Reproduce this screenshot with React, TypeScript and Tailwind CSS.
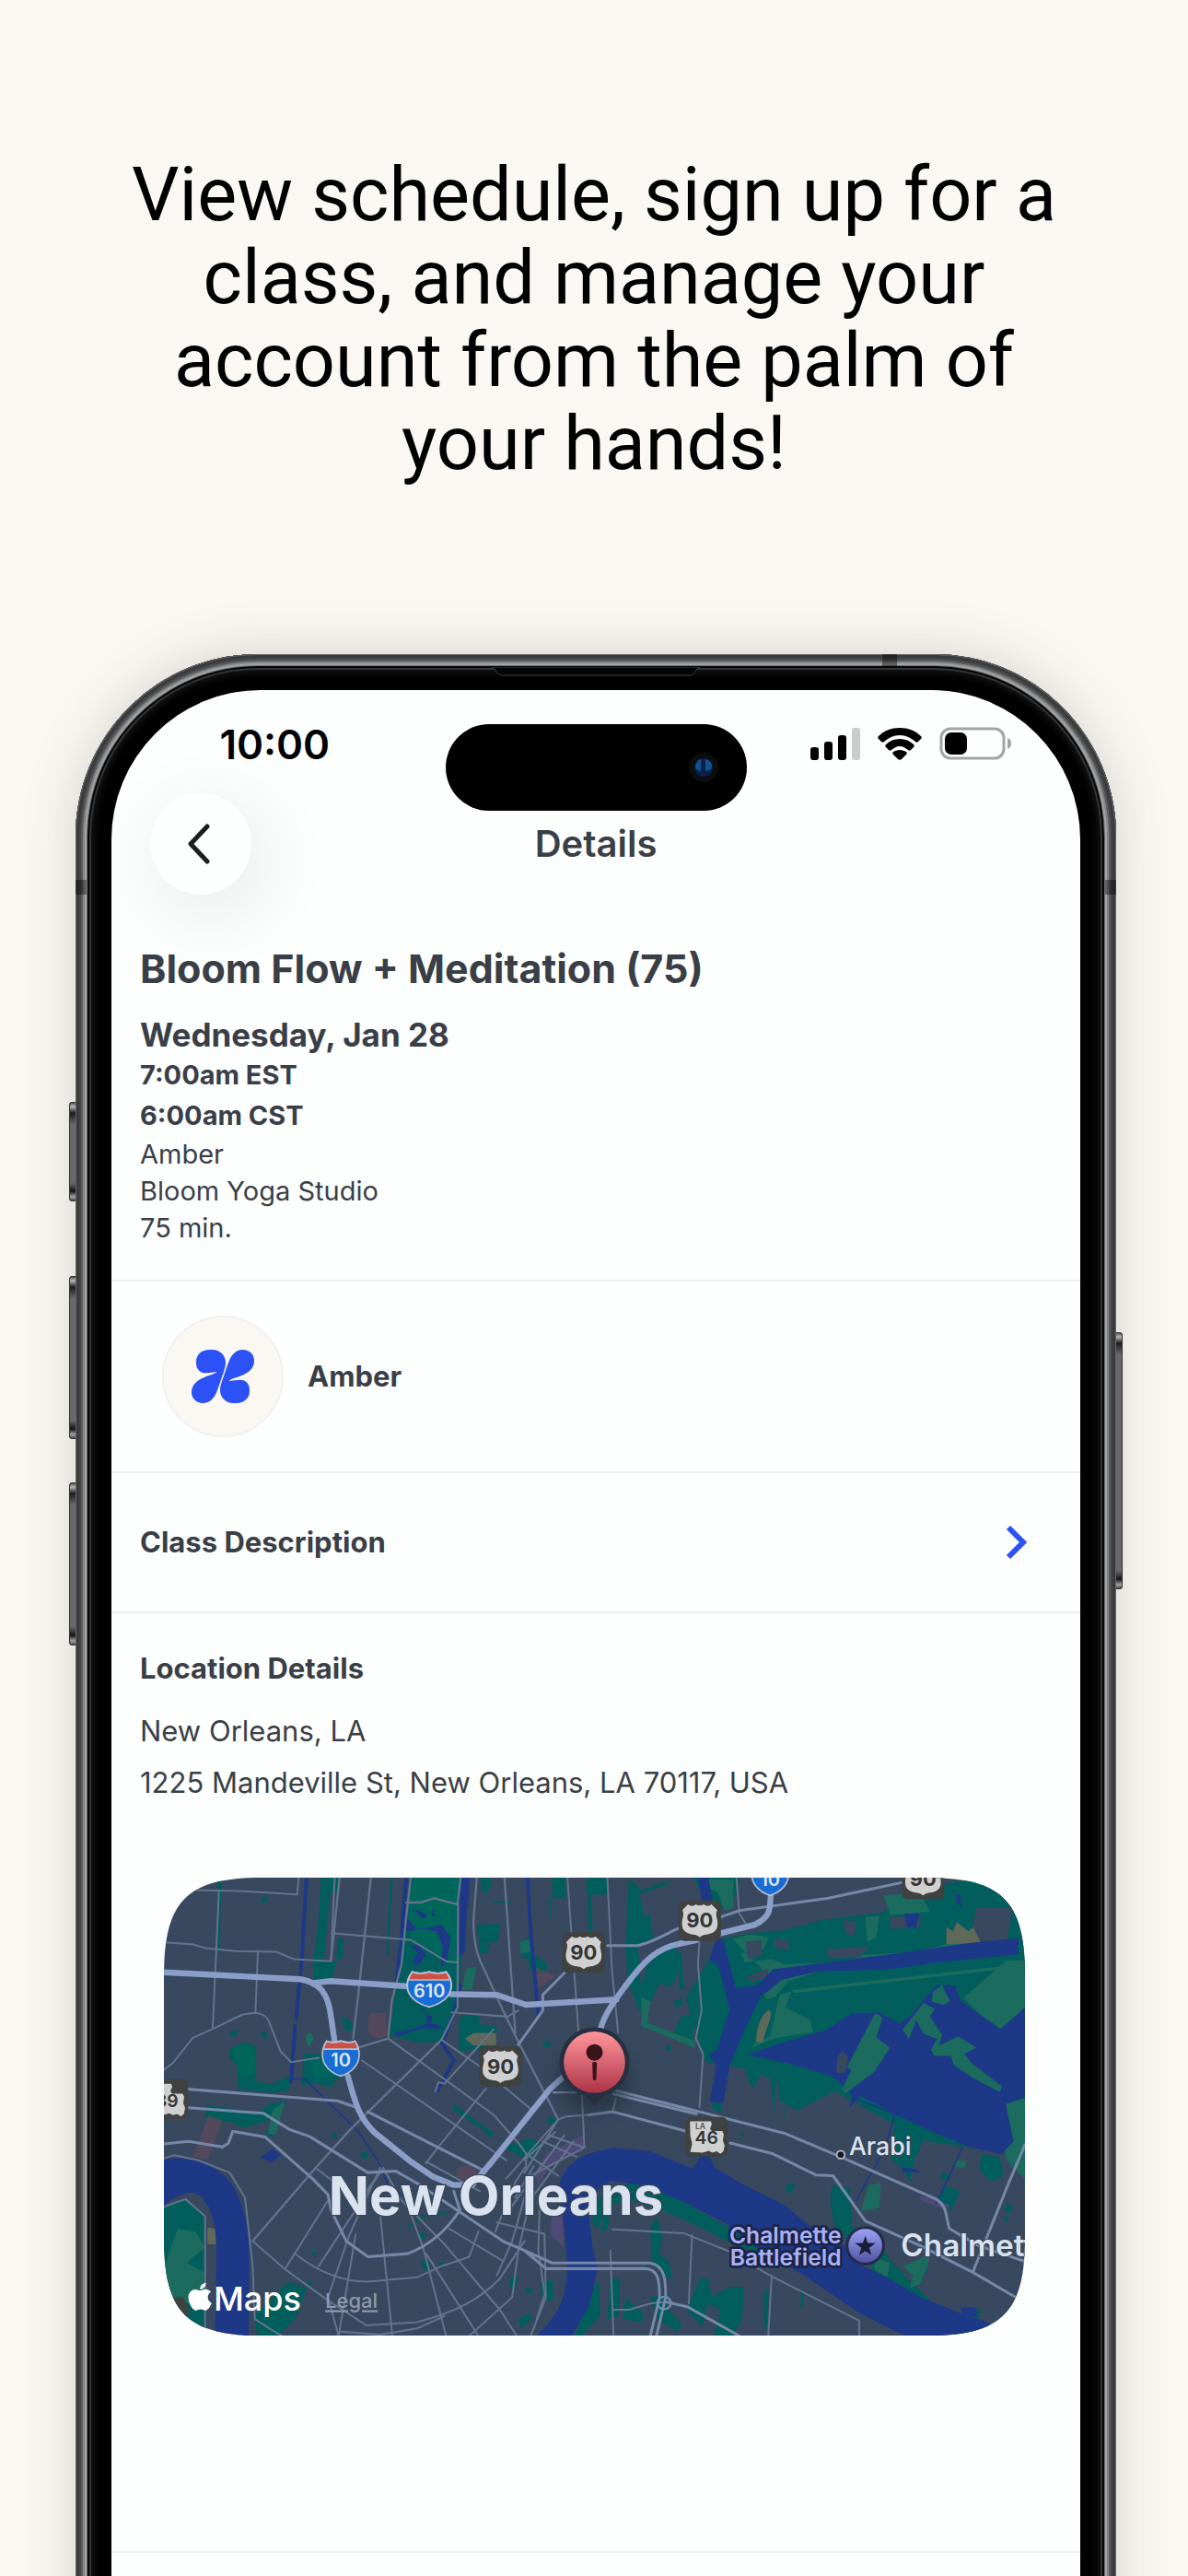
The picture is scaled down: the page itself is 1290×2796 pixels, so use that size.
import type { ReactNode } from 'react'
import { FaApple } from 'react-icons/fa'

const LAND = '#38495f'
const WATER = '#1e3888'
const TEAL = '#015e5d'
const PARK = '#00655a'
const MOSS = '#1b6b5e'
const ROAD = '#63738d'
const MAJOR = '#7688a7'
const HIGHWAY = '#8b9ec8'

function StatusBar() {
  return (
    <div className="grid grid-cols-[1fr_327px_1fr] items-start pt-[37px]">
      <time className="pr-2 text-center text-[44px] leading-[44px] font-semibold text-black">10:00</time>
      <div className="flex h-[94px] items-center justify-end rounded-full bg-black pr-[31px]">
        <svg viewBox="0 0 32 32" className="size-8" aria-hidden="true">
          <circle cx="16" cy="16" r="16" fill="#0c0d0f" />
          <circle cx="16" cy="16" r="10" fill="#08204a" />
          <path d="M9 10c2-3 4-3 4-3v13c-3 0-6-3-6-6zM18 7c5 1 8 5 7 9-2 4-6 4-7 3z" fill="#12538c" />
        </svg>
      </div>
      <div className="flex items-center justify-center gap-[19px] pt-[3px] pr-1">
        <svg viewBox="0 0 54 35" className="h-[35px] w-[54px]" aria-hidden="true">
          <rect x="0" y="21" width="9" height="14" rx="3" />
          <rect x="15" y="15" width="9" height="20" rx="3" />
          <rect x="30" y="8" width="9" height="27" rx="3" />
          <rect x="45" y="0" width="9" height="35" rx="3" fill="#cbcccc" />
        </svg>
        <svg viewBox="0 0 48 35" className="h-[35px] w-12" aria-hidden="true">
          <path d="M24 0c9 0 17 3 23 9 1 1 1 2 0 3l-3 3c-1 1-2 1-3 0-5-4-10-7-17-7S12 11 7 15c-1 1-2 1-3 0l-3-3c-1-1-1-2 0-3C7 3 15 0 24 0z" />
          <path d="M24 12c6 0 11 2 15 6 1 1 1 2 0 3l-3 3c-1 1-2 1-3 0-3-2-5-4-9-4s-6 2-9 4c-1 1-2 1-3 0l-3-3c-1-1-1-2 0-3 4-4 9-6 15-6z" />
          <path d="M24 24c3 0 5 1 7 2 1 1 1 2 0 3l-5 5c-1 1-3 1-4 0l-5-5c-1-1-1-2 0-3 2-1 4-2 7-2z" />
        </svg>
        <svg viewBox="0 0 79 36" className="h-9 w-[79px]" aria-hidden="true">
          <rect x="2" y="2" width="68" height="32" rx="10" fill="none" stroke="#a3a4a4" strokeWidth="3" />
          <rect x="6" y="6" width="24" height="24" rx="7" />
          <path d="M74 12c3 1 4 3 4 6s-1 5-4 6z" fill="#a3a4a4" />
        </svg>
      </div>
    </div>
  )
}

function NavBar() {
  return (
    <nav className="-mt-[19px] grid grid-cols-[1fr_auto_1fr] items-center px-[42px]">
      <button
        type="button"
        aria-label="Back"
        className="flex size-[110px] items-center justify-center rounded-full bg-[#fdfffe] shadow-[12px_18px_80px_6px_rgba(0,0,0,0.08)]"
      >
        <svg viewBox="0 0 26 44" className="mr-1 h-11 w-[26px]" aria-hidden="true">
          <path d="M22 3 4 22l18 19" fill="none" stroke="#1d1d1f" strokeWidth="5" strokeLinecap="round" strokeLinejoin="round" />
        </svg>
      </button>
      <h2 className="text-[40px] leading-[48px] font-semibold">Details</h2>
    </nav>
  )
}

function BloomLogo() {
  const half =
    'M15 44v-5C15 16 33 0 58 0h10c25 0 43 19 43 42 0 12-3 20-7 32-9 25-16 50-25 70-10 20-24 30-41 30-23 0-38-15-38-35 0-25 18-40 43-50 15-6 33-10 39-16-9-2-19 3-37 3-18 0-30-14-30-32z'
  return (
    <svg viewBox="0 0 204 174" className="w-[68px]" fill="#2c51f6" aria-hidden="true">
      <path d={half} />
      <path d={half} transform="rotate(180 102 87)" />
    </svg>
  )
}

function UsRoute({ x, y, label }: { x: number; y: number; label: string }) {
  return (
    <g transform={`translate(${x} ${y})`}>
      <rect x="-69" y="-66" width="138" height="132" rx="20" fill="#404141" />
      <path
        d="M-38-53c8 7 18 6 25 0 8 5 18 5 26 0 7 6 17 7 25 0l19 19c-9 14 2 28 1 45 0 24-16 31-36 34-10 1-16 4-22 9-6-5-12-8-22-9-20-3-36-10-36-34-1-17 10-31 1-45z"
        fill="#cfd0cf"
      />
      <text y="23" textAnchor="middle" fontSize="66" fontWeight="700" fill="#343536">{label}</text>
    </g>
  )
}

function Interstate({ x, y, wide, label }: { x: number; y: number; wide?: boolean; label: string }) {
  return (
    <g transform={`translate(${x} ${y})`}>
      <g transform={wide ? 'scale(1.2 1)' : undefined} stroke="#b9bfd0" strokeWidth="5">
        <path d="M-46-56c14 6 32 5 46 0 14 5 32 6 46 0 8 12 14 26 14 44 0 36-28 60-60 70-32-10-60-34-60-70 0-18 6-32 14-44z" fill="#186dd5" />
        <path d="M-46-56c14 6 32 5 46 0 14 5 32 6 46 0 5 8 9 16 11 26H-57c2-10 6-18 11-26z" fill="#cb5046" />
      </g>
      <text y="27" textAnchor="middle" fontSize="60" fontWeight="600" fill="#dfe6f3">{label}</text>
    </g>
  )
}

function StateRoute({ x, y, label, small }: { x: number; y: number; label: string; small?: string }) {
  return (
    <g transform={`translate(${x} ${y})`}>
      <rect x="-69" y="-64" width="138" height="128" rx="20" fill="#404141" />
      <path d="M-54-50h68l3 10-6 14 6 8h34l5 10-3 22 6 14-4 20-10 8-12-8-14 4-12-6-20 6-40-2 6-26-6-28z" fill="#cfd0cf" />
      {small && <text x="-20" y="-24" textAnchor="middle" fontSize="26" fontWeight="600" fill="#555">{small}</text>}
      <text y="25" textAnchor="middle" fontSize="58" fontWeight="600" fill="#343536">{label}</text>
    </g>
  )
}

function Lines({ color, width, children }: { color: string; width: number; children: ReactNode }) {
  return (
    <g fill="none" stroke={color} strokeWidth={width} strokeLinejoin="round" strokeLinecap="round">
      {children}
    </g>
  )
}

function Terrain() {
  return (
    <g transform="translate(0 -1) scale(1 1.015)">
      {/* parks and marsh */}
      <g fill={TEAL}>
        <path d="M56 1110 125 1085 190 1140 195 1524H56zM790 560 860 54h178l-22 420-50 105-80 5z" />
        <path d="M566 54h64l-8 50-24-4-14 140-8 80h44l-18 70-54 8-8-60 16-110 8-114zM640 250h-16l-8 68 22-6zM230 66h14l-8 230h-10z" />
        <path d="M802 54h-8l-14 250 6 2zM1090 54h30v30l-14 22-18-14zM1074 206l78-4-10 60h-28l-30 4zM1018 502l60-14 8 36 56 8-8 70-118 8zM1320 54h44v66h-44zM1432 54h68v54h-68zM1308 120h8v66h-6z" />
        <path d="M1214 262l34-20 14 60 44 30-12 30-44-10-8-34-22-10zM1436 110h12l4 120h-14zM1128 130h60v6h-60zM1084 266l38 4-16 28-24-4z" />
        <path d="M270 600l54-18 32 14-2 110 46 10 68-24-6 46-50 6-114-10-4-80-26-20zM270 548l24-6 2 18-22 2zM372 552l16-6 6 20-18 4zM374 120l24-10-6 20-18 4z" />
        <path d="M196 782l48 8 120 18 40-30 56-10-54 60-42 14-50 16-40-20-84-16zM410 820l-22 60 22 4 22-54zM510 620h90l40 60-44 46-46-12-44 6z" />
        <path d="M630 500l30 10 14 30-24 10zM696 940l16-10 10 14-12 18zM600 880l18-6 2 14-16 2zM1000 780l110 80 20 10-10 20-30-30-90-60zM1150 890l40 20 60-20 40 20-50 50-60-30z" />
        <path d="M890 1190l22 8-14 16-14-4zM892 1290l18-14 14 24-16 16zM946 1290l30-6-16 18zM850 1170l80-50 60 10-80 10-56 36zM350 1460l110-110 60 20-30 90-60 64h-70z" />
        <path d="M530 1250l26 8-10 12zM520 1350l22 2-10 12zM1180 1350l20-30 10 20-20 50zM1282 1350l40-4 2 60-34 10zM1210 1470l36-20 10 20-40 30zM1236 1370l22 6-6 14-18-4zM1302 830l24-10 4 20-20 8zM1292 578l22 2-2 20-20-4z" />
        <path d="M1450 1130l28-60 30 10-20 60-20 40-16-20zM1440 1380l34-30 2 110-60 64h-20z" />
      </g>
      <g fill={TEAL}>
        <path d="M1440 54h54v50h-54zM1570 60l30 20 20 100 20-10 10 90-50 10 10 140-10 60-34-90-6-120zM1600 96l100-30v10l-94 30zM1640 300l80-36 20 70-30 70-40-10-20 40-24 60-30-20 20-90zM1740 290l10 120-14 8-8-120z" />
        <path d="M1780 54h150l-10 60-30-4-20 60-60-60zM1740 500l44-10-4 80-40 10-24-30zM1720 450l20-10 8 20-24 12zM1690 600l14-10 4 14-12 8z" />
        <path d="M1870 250 1960 234 2080 222 2200 190 2400 166 2460 100 2640 66 2860 54V1010l-40-60-60-20-220-30-300-160-120 60-60-30-4-60-90-40-150-30-60-200z" />
        <path d="M1820 590l60 10 50 40 260 60 30 20-80 0-30-10-110-40-10 40-20 20-20-60-60-20-60 0zM1850 720l24-40 16 6-20 120-30-10zM2030 700h20l-6 100-8 20 6-30zM2100 680l-20 130-14 40 24-100zM2160 740l20 10-16 24-14-6z" />
        <path d="M2436 820l80 20 30 20-50 110-10 60-30-50-30-20zM2230 1040l60 10 6 120 50 30 30 30-20 40-60-40-56-60-14-70zM2600 1040l50 20-30 60-50-20zM2720 940l60 10 10 60-40 20-40-40z" />
        <path d="M1930 870l14 4-6 14zM2080 1050l20-20 10 6-10 30-20-6zM2380 1220l40 60 60 60 80 80 60 30 100-10-20 50 50 20v14h-100l-100-80-120-60-70-80z" />
        <path d="M1500 1060l80-30 60 20 100 40 200 110 60 40 10 20-80-20-120-60-130-60-100-30-60 10-20 80-20 10zM1640 1180l20-40 20 60-10 60 30 24 14 60-30-14-40-50zM1800 1340h30l10 60 60-34h44l-6 110-30 46h-60l20-80-40-20-20 70-50-50z" />
        <path d="M1560 1400l20 20 40 30-10 30-60-10zM1640 1400l60-10-6 40 50 60-20 20-60-40zM1510 1340h30v120l-40 10zM2010 1376l16 6-8 120-8 6zM2130 1380h8v50h-8zM2800 1100l20 8-8 24-18-8zM2790 1140l20 4-10 20zM2590 1000l20 6v20l-24-6z" />
      </g>
      <path d="M868 54h164l-18 86-76-18-90 12zM850 140l90-16 74 20-4 180-60-20-90-44zM530 640l60-10 20 60-60 10zM280 600l40-14 34 20 0 80-50 10z" fill={PARK} />
      <g fill={MOSS}>
        <path d="M100 1180l60 10 30 50-60 50 60 30-20 90-90 20-24-120zM410 800l40-30-30 110-26-6zM1216 260l30-10 6 40-34 10zM1040 345l34-4-14 70-34 4zM515 560l20-8 10 20-20 26z" />
        <path d="M1830 60h80v90l-30 10-20-60-30-10zM1906 250l60-14 60 10-20 40-70 10 10 30 90-10 40 16 220-10 30-20 180-10 60-14 80-26 80 10-40 30-140 10-220 20-90 16-90 30-60 20-40 50-30 6-20-40 14-50z" />
        <path d="M2400 110l120-6 30 60-130 10zM2340 180l46-4-10 70-30 14zM2660 440l140-120h60v150l-80 70-70-50zM1610 440l30 10-10 70 80 30 80 30-10 20-90-40-80-30 2-20z" />
        <path d="M2100 414 2860 330v10L2110 424zM2060 430l40-10-20 50 80 40 10 40-130 20-70 30 10-16 50-20zM2790 780l70-20v260l-60-60-20-100z" />
        <path d="M2350 1040l40-6-4 80-60 10zM2460 1300l30-10 60-30-10 50-24 50-30 10 10-40zM2370 1270l50 20-10 50-40-30zM2630 960l40 4-6 20-30-2z" />
      </g>
      <g fill="#5f6859">
        <path d="M1985 580c0-50 20-90 40-100 10-2 8 20 2 36-10 30-16 40-20 68zM2604 212l22 14 12-30 24 20 14 10 32-28 12 66-116 4zM1036 570l30-18h72v40h-76zM198 1176l28 4v50h-28z" />
      </g>
      <path d="M725 490l54-4 4 74-34 10-28-20zM202 816l42 20-44 124-50-10zM1010 985l40-10 40 30-30 30-50-20zM1264 340l70 30-60 40z" fill="#65485a" opacity="0.6" />
      <path d="M1300 940l120-60 4 40-110 60-40 60-8-40zM1316 1140h38l4 100-42-40zM2516 1076l60 10 40 20-14 14-80-30z" fill="#554b7c" opacity="0.8" />
      <path d="M1950 260l52-6 2 50-44 12zM2044 250l44 4 4 34-48-10zM2214 284l140-10-30 34-100 6zM1954 370l70-24v24l-50 20zM2700 150h120l-20 120h-80l-30-60zM2270 190l40 4-6 50-30-14zM2420 180h104l-10 34-92 4z" fill={LAND} />

      {/* river, canals and lakes */}
      <g fill={WATER}>
        <path d="M56 956C150 946 230 975 275 1035 325 1110 335 1200 334 1300L332 1524H222L226 1310C232 1200 220 1120 180 1080 150 1050 110 1065 56 1106z" />
        <path d="M1270 1524C1340 1455 1370 1400 1368 1300 1366 1200 1350 1120 1344 1040 1355 985 1400 945 1470 932L1520 920 1640 932 1780 988 1800 950 1830 945 1850 985 1950 1042 2080 1106 2160 1172 2240 1195 2310 1290 2400 1330 2520 1400 2660 1455 2740 1480 2760 1524H2470L2320 1450 2140 1330 2000 1250 1880 1160 1740 1090 1610 1040 1510 1026 1464 1060 1440 1140 1452 1240 1468 1310 1440 1430 1385 1524z" />
        <path d="M1795 54h34l14 76-34 4zM1850 250l28 0 20 80 20 78 70-8 50-52 160-20 240-30 240-34 160-16v52l-260 26-160 22-240 8-110 26-70 56-50 100-24 60-26 60-20 120-44-4 20-120-26-30 30-20 20-66 20-60-36-140-30-20 20-60z" />
        <path d="M1955 622l120-40 140-40 80-52 90-4 40 22 26 14 40-30 80-92h60l20 50 130 90 80-70v290l-64 20 26 120-40 40-100-20-160-66-200-100-36 40 10-40-60-60-130-40z" />
        <path d="M2466 170l50 0-10 44h-30zM2634 108h14l4 40-14-10zM368 950l20-10 20-18 30 22-30 24zM850 186l30 34 80-14 30 40-12 70-20 30 6-70-20-50-60-10-20 10-24-6zM864 150l50 24-16 12zM930 154l10 26-14-6zM862 276l20-10 26 36-24 36-20-14 20-30z" />
        <path d="M880 470l50 30-6 20 40 14-20 8-40-6-90 28-8-14 60-10 50-20-10-40zM2460 984l50 6 10 10-60-2zM2650 1430l50 4 6 30-50-10z" />
      </g>
      <g fill={MOSS}>
        <path d="M2372 488l24 14-20 64 44 34-50 76-94 70-12-14 30-60-14-10z" />
        <path d="M2530 455l36 20-16 24 40 60-10 34 62-30 60 36-40 20 24 30 100 76-8 16-90-46-60-40-10-30-54 0-10-20 20-34-44-16-24-44-24 60-20-30zM2560 420l30-20 26 50-20 12-40-10z" />
      </g>
      <path d="M2265 610l20 20-10 50-30 0 4-50z" fill={LAND} />
      <Lines color={WATER} width={12}>
        <path d="M520 54 506 300 487 505M845 54 830 240 812 400M1020 400 1000 490 962 586 1000 640 945 740M1240 54 1252 250 1275 490" />
        <path d="M483 530 470 710" />
      </Lines>
      <Lines color={WATER} width={28}>
        <path d="M1040 54 1026 200 1022 290" />
      </Lines>
      <Lines color={WATER} width={5}>
        <path d="M475 700h40L690 868 760 975 785 1040 830 1075M2435 820 2400 930 2310 1090M2655 920 2610 1020 2570 1100M2300 760 2560 860 2780 940" />
      </Lines>

      {/* local streets */}
      <Lines color={ROAD} width={6}>
        <path d="M495 54 490 108 320 98 165 94M235 100 215 535M56 262 150 268 190 280 290 290 422 292 480 316 600 322 612 54M602 232 860 254 975 322 1012 326M362 290 354 488M56 670 84 650 150 568 214 540 312 493 354 488C380 490 395 505 400 520L436 612 470 646 560 632" />
        <path d="M600 318 628 54M845 134h45l46-14 76 20 10-86M1014 140 1012 470 960 574 660 865 550 985 345 1220M860 54 845 180 830 330 798 450 786 570 680 602M1075 54 1064 190C1064 270 1080 310 1090 330L1160 480 1215 590 1340 830M1165 54 1200 550M730 54 690 420 672 570" strokeWidth="7" />
        <path d="M786 570 1130 815 1210 905 1236 940 1235 980 1200 1030 1135 1190M700 640 1170 960M960 574 1085 660 1255 800M992 486 1175 500 1210 480M1370 54 1406 550M1415 700 1425 920 1250 1010M1340 830 1230 1000M1340 830 1365 820 1440 815" />
        <path d="M1340 830 1170 1020M1360 880 1180 1120M1390 900 1240 1100M1290 900 1400 950M1310 880 1425 920M1250 950 1340 1010M1330 870 1230 960M1260 980 1200 1080M770 985 560 1300M550 985 700 1100M760 985 660 1200 590 1400 625 1524M770 985 700 1080M770 985 830 1090 970 1230 1150 1440 1205 1524" />
        <path d="M760 1130 780 1330 800 1524M840 1080 900 1240 975 1524M680 1200 625 1524M910 1260 1080 1524M590 1090 450 1310M345 1220 450 1310 590 1410 715 1490 880 1480C1000 1450 1080 1410 1150 1340L1230 1220M485 1262C560 1320 640 1350 720 1350L880 1336 960 1300 1010 1284 1050 1270 1080 1190M985 1180 1160 1284M1140 1160 1295 1196 1300 1400 1250 1524" />
        <path d="M1250 1080 1210 1250 1190 1400 1050 1524M1230 1080 1190 1220 1140 1330M1280 1100 1275 1250 1296 1390 1270 1470M630 1510 760 1520 880 1500 970 1460M190 1524V1140L126 1085 56 1110M56 955 90 944 165 960 270 1000 320 1080 345 1300 352 1470 400 1500 440 1524M910 965 1085 1060M910 970 940 930 1105 730M940 740 950 710 970 715 1130 540" />
      </Lines>
      <Lines color={ROAD} width={6}>
        <path d="M1500 54 1515 350 1535 550M1800 260 1795 330 1807 480 1788 570 1812 620 1800 790M1528 760 1518 805M1516 1182 1750 1195 1890 1250 2030 1330 2320 1475V1524M1776 1200 1765 1420M1510 1250 1520 1524M2035 1330 2024 1524M1520 1440H1570L1640 1420 1690 1415M1920 54 1930 170 1950 200" />
      </Lines>

      {/* major roads */}
      <Lines color={MAJOR} width={9}>
        <path d="M130 732 620 770 680 790M720 805 1090 990M135 792 380 810 465 862 530 884 720 1000 810 995 890 1040 1010 1120 1160 1220 1230 1250 1320 1290H1640C1690 1300 1690 1350 1690 1400L1660 1524M1230 1250 1300 1308H1620C1665 1310 1670 1340 1670 1400L1640 1524M56 908 136 900 246 918 266 906 280 868 386 886 540 1020 590 1070 600 1120 650 1220 720 1270 850 1260C930 1230 980 1180 1020 1120L1000 1060" />
        <path d="M1360 360 1290 430 1290 480 1210 590M1500 272H1600C1670 255 1710 220 1750 210M1870 180 1930 160 2220 120 2460 70M1520 735 1800 805 2080 875 2260 950 2570 1085C2610 1110 2600 1140 2614 1180L2710 1235 2860 1285M1520 748 1790 812M1440 815 1518 805 1760 868M1900 905 2040 940 2180 1008 2235 1010 2340 1155 2520 1235 2690 1320 2830 1400M2860 910 2800 1050 2690 1320M1690 1415 1760 1430 1930 1524" />
      </Lines>
      <Lines color={MAJOR} width={7}>
        <path d="M1325 743H1400" />
        <ellipse cx="1685" cy="1418" rx="22" ry="20" />
      </Lines>

      {/* highways */}
      <Lines color={HIGHWAY} width={19}>
        <path d="M56 358 500 380C560 390 590 420 600 500L612 580M655 690C680 780 690 820 740 870L860 965 930 1012 1000 1040H1060L1120 970 1310 735 1360 690" />
        <path d="M540 392 600 386 840 402M990 428 1140 430 1235 462 1530 445M1478 540C1490 490 1530 440 1560 400 1620 320 1660 280 1740 265L1790 255M1860 235 1980 205C2030 180 2030 160 2032 110" />
      </Lines>
      <path d="M60 1400h60l20 50-40 40-50-30z" fill="#404141" />
    </g>
  )
}

function LocationMap() {
  return (
    <svg
      viewBox="56 54 2804 1491"
      className="block w-full"
      role="img"
      aria-label="Map of New Orleans"
      fontFamily='Inter, "Liberation Sans", sans-serif'
    >
      <defs>
        <clipPath id="card">
          <path d="M56 374C56 129 131 54 376 54H2540C2785 54 2860 129 2860 374V1225C2860 1470 2785 1545 2540 1545H376C131 1545 56 1470 56 1225Z" />
        </clipPath>
        <linearGradient id="pin" x1="0" y1="0" x2="0" y2="1">
          <stop offset="0" stopColor="#ff969b" />
          <stop offset="1" stopColor="#ae3448" />
        </linearGradient>
        <linearGradient id="star" x1="0" y1="0" x2="0" y2="1">
          <stop offset="0" stopColor="#9ba1f3" />
          <stop offset="1" stopColor="#5255a4" />
        </linearGradient>
        <filter id="soft" x="-50%" y="-50%" width="200%" height="200%">
          <feGaussianBlur stdDeviation="24" />
        </filter>
      </defs>

      <g clipPath="url(#card)">
        <rect x="56" y="54" width="2804" height="1491" fill={LAND} />
        <Terrain />

        <UsRoute x={1423} y={298} label="90" />
        <UsRoute x={1152} y={669} label="90" />
        <UsRoute x={1801} y={194} label="90" />
        <UsRoute x={2528} y={58} label="90" />
        <Interstate x={920} y={417} label="610" wide />
        <Interstate x={632} y={642} label="10" />
        <Interstate x={2030} y={54} label="10" />
        <StateRoute x={66} y={775} label="39" />
        <StateRoute x={1823} y={897} label="46" small="LA" />

        <text x="592" y="1152" fontSize="174" fontWeight="700" fill="#dae2ef" stroke="#38465a" strokeWidth="8" paintOrder="stroke">New Orleans</text>
        <circle cx="2260" cy="956" r="13" fill="#16181c" stroke="#a9b2c0" strokeWidth="6" />
        <text x="2287" y="956" fontSize="80" fontWeight="500" fill="#dbe3f0" stroke="#38465a" strokeWidth="6" paintOrder="stroke">Arabi</text>
        <g fontSize="74" fontWeight="600" fill="#a9b1f6" stroke="#1c2445" strokeWidth="16" strokeLinejoin="round" paintOrder="stroke" textAnchor="end">
          <text x="2262" y="1245">Chalmette</text>
          <text x="2262" y="1318">Battlefield</text>
        </g>
        <circle cx="2340" cy="1252" r="64" fill="#252a4c" />
        <circle cx="2340" cy="1252" r="55" fill="url(#star)" />
        <path d="m2340 1220 8 23 25 1-20 15 7 24-20-14-20 14 7-24-20-15 25-1z" fill="#1c1d38" />
        <text x="2456" y="1287" fontSize="100" fontWeight="600" fill="#dae2ef" stroke="#38465a" strokeWidth="6" paintOrder="stroke">Chalmette</text>

        <ellipse cx="1458" cy="710" rx="120" ry="110" fill="#1f2937" opacity="0.55" filter="url(#soft)" />
        <path d="M1420 753h76l-38 42z" fill="#272f40" />
        <circle cx="1458" cy="655" r="114" fill="#272f40" />
        <circle cx="1458" cy="655" r="100" fill="url(#pin)" />
        <circle cx="1458" cy="623" r="27" fill="#3b131b" />
        <path d="M1451 656q7-4 15 0l-2 55q-5 6-11 0z" fill="#3b131b" />

        <FaApple x={122} y={1366} size={103} color="#ffffff" />
        <text x="218" y="1463" fontSize="108" fontWeight="500" fill="#ffffff">Maps</text>
        <a href="#legal">
          <text x="581" y="1456" fontSize="66" fontWeight="500" fill="#8e9aab" textDecoration="underline">Legal</text>
        </a>
      </g>
    </svg>
  )
}

function SideButton({ className }: { className: string }) {
  return (
    <span
      className={`absolute w-3 rounded-[4px] bg-[linear-gradient(to_bottom,#3a3a3b_0,#c4c4c5_5px,#1a1a1b_12px,#6c6d6f_24px,#6c6d6f_calc(100%-20px),#111112_calc(100%-11px),#b0b0b1_calc(100%-5px),#333334_100%)] shadow-[inset_0_0_0_1px_#333436] ${className}`}
    />
  )
}

function Phone({ children }: { children: ReactNode }) {
  return (
    <div className="relative mr-[78px] -mb-20 ml-[82px] flex flex-1 flex-col">
      <SideButton className="-left-[7px] top-[486px] h-[108px]" />
      <SideButton className="-left-[7px] top-[675px] h-[177px]" />
      <SideButton className="-left-[7px] top-[899px] h-[177px]" />
      <SideButton className="-right-[7px] top-[736px] h-[279px]" />
      <div className="relative flex flex-1 flex-col rounded-t-[198px] bg-black px-[39px] pt-[39px] shadow-[inset_0_0_0_1px_#66676a,inset_0_0_0_4px_#3a3b3d,inset_0_0_0_6px_#444648,inset_0_0_0_8px_#5b5c5e,inset_0_0_0_10px_#858688,inset_0_0_0_12px_#a2a3a4,inset_0_0_0_13px_#707172,inset_0_0_0_15px_#060606,inset_0_0_0_17px_#333334,inset_0_0_8px_20px_#161617,0_0_60px_rgba(60,55,45,0.2)]">
        <span className="absolute top-[245px] left-0 h-4 w-3 bg-black/40" />
        <span className="absolute top-[245px] right-0 h-4 w-3 bg-black/40" />
        <span className="absolute top-0 right-[238px] h-[13px] w-4 bg-black/40" />
        <svg viewBox="0 0 226 10" className="absolute top-[14px] left-1/2 h-[10px] w-[226px] -translate-x-1/2" aria-hidden="true">
          <path d="M0 0q3 1 5 5t6 4h204q4 0 6-4t5-5z" fill="#050505" stroke="#3c3c3d" strokeWidth="1" />
        </svg>
        <div className="flex flex-1 flex-col overflow-hidden rounded-t-[162px] bg-[#fdfefe] text-[#3a3f47]">{children}</div>
      </div>
    </div>
  )
}

export default function App() {
  return (
    <main className='flex min-h-screen flex-col overflow-hidden bg-[#fbf8f3] font-[Inter,"Liberation_Sans",sans-serif]'>
      <h1 className='px-[100px] pt-[167px] pb-[183px] text-center font-[Roboto,"Open_Sans",sans-serif] text-[81px] leading-[90px] text-black'>
        View schedule, sign up for a<br />
        class, and manage your<br />
        account from the palm of<br />
        your hands!
      </h1>

      <Phone>
        <StatusBar />
        <NavBar />

        <section className="border-b-2 border-[#eff1f1] px-[31px] pt-[54px] pb-9">
          <h3 className="mb-6 text-[43px] leading-[52px] font-bold">Bloom Flow + Meditation (75)</h3>
          <p className="text-[35px] leading-[44px] font-bold">Wednesday, Jan 28</p>
          <p className="text-[29px] leading-[44px] font-bold">7:00am EST</p>
          <p className="text-[29px] leading-[44px] font-bold">6:00am CST</p>
          <p className="text-[29px] leading-[40px]">Amber</p>
          <p className="text-[29px] leading-[40px]">Bloom Yoga Studio</p>
          <p className="text-[29px] leading-[40px]">75 min.</p>
        </section>

        <section className="flex items-center gap-[26px] border-b-2 border-[#eff1f1] py-[37px] pl-[55px]">
          <div className="flex size-[132px] items-center justify-center rounded-full border-2 border-[#f0f1f1] bg-[#fbf8f4]">
            <BloomLogo />
          </div>
          <p className="text-[31px] leading-[40px] font-bold">Amber</p>
        </section>

        <button
          type="button"
          className="flex items-center justify-between border-b-2 border-[#eff1f1] py-[55px] pr-[57px] pl-[31px] text-left text-[31px] leading-[40px] font-bold"
        >
          Class Description
          <svg viewBox="0 0 24 38" className="h-[38px] w-6" aria-hidden="true">
            <path d="m3 3 16 16L3 35" fill="none" stroke="#2c51f6" strokeWidth="6" />
          </svg>
        </button>

        <section className="border-b-2 border-[#eff1f1] pt-10 pb-[234px]">
          <div className="px-[31px] text-[31px] leading-[40px]">
            <h3 className="mb-7 font-bold">Location Details</h3>
            <p className="mb-4">New Orleans, LA</p>
            <p>1225 Mandeville St, New Orleans, LA 70117, USA</p>
          </div>
          <div className="mt-[83px] mr-[60px] ml-[57px]">
            <LocationMap />
          </div>
        </section>
      </Phone>
    </main>
  )
}
